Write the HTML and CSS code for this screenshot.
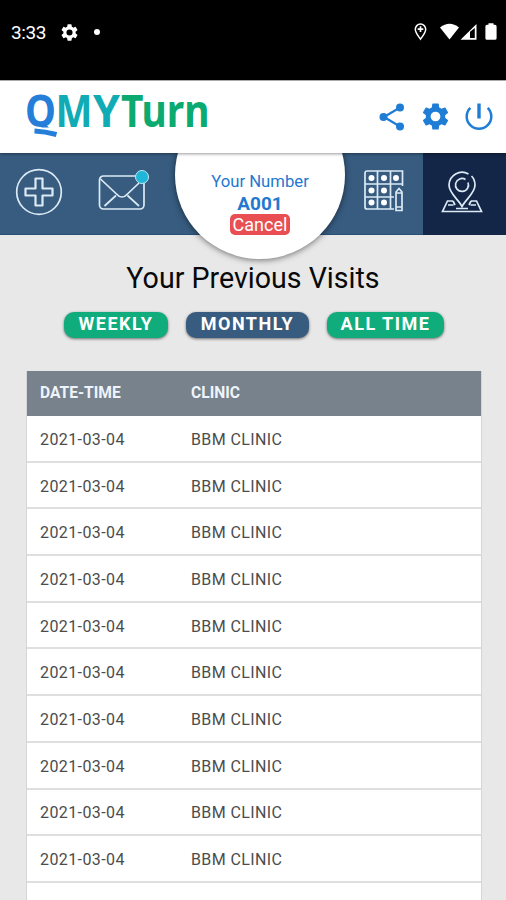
FILE: index.html
```html
<!DOCTYPE html>
<html lang="en">
<head>
<meta charset="utf-8">
<title>QMYTurn</title>
<link rel="stylesheet" href="styles.css">
</head>
<body>
<div class="status">
  <span class="clock">3:33</span>
  <svg class="gear-small" viewBox="2 2 20 20"><path fill="#fff" fill-rule="evenodd" d="M19.14 12.94a7.5 7.5 0 0 0 0-1.88l2.03-1.58a.5.5 0 0 0 .12-.61l-1.92-3.32a.5.5 0 0 0-.59-.22l-2.39.96a7 7 0 0 0-1.62-.94l-.36-2.54a.5.5 0 0 0-.48-.41h-3.84a.5.5 0 0 0-.47.41l-.36 2.54a7.4 7.4 0 0 0-1.62.94l-2.39-.96a.5.5 0 0 0-.59.22L2.74 8.87a.5.5 0 0 0 .12.61l2.03 1.58a7.5 7.5 0 0 0 0 1.88l-2.03 1.58a.5.5 0 0 0-.12.61l1.92 3.32c.12.22.37.29.59.22l2.39-.96c.5.38 1.03.7 1.62.94l.36 2.54c.05.24.24.41.48.41h3.84c.24 0 .44-.17.47-.41l.36-2.54a7.4 7.4 0 0 0 1.62-.94l2.39.96c.22.08.47 0 .59-.22l1.92-3.32a.5.5 0 0 0-.12-.61zM12 15.6a3.6 3.6 0 1 1 0-7.2 3.6 3.6 0 0 1 0 7.2z"/></svg>
  <span class="dot"></span>
  <svg class="signals" viewBox="0 0 84 18">
    <path d="M6.500 16.200C4 12.500 1.300 9.800 1.300 6.300a5.200 5.200 0 0 1 10.400 0c0 3.500-2.700 6.200-5.200 9.900z" fill="none" stroke="#fff" stroke-width="1.500"/>
    <path d="M6.500 3.300v5.600M3.700 6.100h5.600" stroke="#fff" stroke-width="1.700"/>
    <path d="M26 4.500q9.500-7.500 19 0L35.500 16.500z" fill="#fff"/>
    <path d="M46.500 16.800L62.500 1v15.800zM56 8.800v6.300h4.800V5z" fill="#fff" fill-rule="evenodd"/>
    <path d="M74.500 1.800V.3h5v1.500h1.500a1.600 1.600 0 0 1 1.600 1.600v11.800a1.600 1.600 0 0 1-1.600 1.600h-8a1.600 1.600 0 0 1-1.600-1.600V3.400A1.600 1.600 0 0 1 73 1.800z" fill="#fff"/>
  </svg>
</div>
<header class="top">
  <svg class="logo" viewBox="0 0 190 50">
    <defs><clipPath id="bowl"><rect x="0" y="0" width="40" height="37.600"/></clipPath></defs>
    <text class="brand blue" x="0" y="37" textLength="31" lengthAdjust="spacingAndGlyphs" clip-path="url(#bowl)">Q</text>
    <path d="M9.500 41Q20 41.500 31.500 44.500" fill="none" stroke="#257fd8" stroke-width="5"/>
    <text class="brand teal" x="30.500" y="37" textLength="37" lengthAdjust="spacingAndGlyphs">M</text>
    <text class="brand teal" x="68" y="37" textLength="27" lengthAdjust="spacingAndGlyphs">Y</text>
    <text class="brand green" x="96" y="37" textLength="88.500" lengthAdjust="spacingAndGlyphs">Turn</text>
  </svg>
  <svg class="share" viewBox="0 0 26 28"><path d="M21 4.500L5 14l16 9.500" fill="none" stroke="#1f7dd6" stroke-width="2.300"/><g fill="#1f7dd6"><circle cx="21" cy="4.500" r="4"/><circle cx="4.500" cy="14" r="4"/><circle cx="21" cy="23.500" r="4"/></g></svg>
  <svg class="gear" viewBox="2 2 20 20"><path fill="#1f7dd6" fill-rule="evenodd" d="M19.140 12.940a7.500 7.500 0 0 0 0-1.880l2.030-1.580a.5.5 0 0 0 .12-.61l-1.920-3.320a.5.5 0 0 0-.59-.22l-2.390.96a7 7 0 0 0-1.620-.94l-.36-2.540a.5.5 0 0 0-.48-.41h-3.840a.5.5 0 0 0-.47.41l-.36 2.540a7.400 7.400 0 0 0-1.620.94l-2.390-.96a.5.5 0 0 0-.59.22L2.740 8.870a.5.5 0 0 0 .12.61l2.030 1.580a7.500 7.500 0 0 0 0 1.880l-2.030 1.580a.5.5 0 0 0-.12.61l1.920 3.320c.12.22.37.29.59.22l2.390-.96c.5.38 1.030.7 1.620.94l.36 2.540c.05.24.24.41.48.41h3.840c.24 0 .44-.17.47-.41l.36-2.540a7.400 7.400 0 0 0 1.620-.94l2.390.96c.22.08.47 0 .59-.22l1.920-3.320a.5.5 0 0 0-.12-.61zM12 15.600a3.600 3.600 0 1 1 0-7.200 3.600 3.600 0 0 1 0 7.200z"/></svg>
  <svg class="power" viewBox="0 0 28 28"><path d="M5.300 4.800a12.300 12.300 0 1 0 17.400 0" fill="none" stroke="#1f7dd6" stroke-width="2.500"/><path d="M14 .5V15.500" stroke="#1f7dd6" stroke-width="3.400"/></svg>
</header>
<nav class="nav">
  <a class="item plus"><svg viewBox="0 0 48 48"><circle cx="24" cy="24" r="22.300"/><path d="M20.500 10.500h7v10H37.500v7H27.500v10h-7v-10H10.500v-7h10z" stroke-linejoin="round"/></svg></a>
  <a class="item mail"><svg viewBox="0 0 52 42"><rect x="1.500" y="7" width="44.500" height="33" rx="4"/><path d="M2.500 10L18.500 25Q21 28 24 28t5.500-3L41 14M6.500 37L18 26.500M41 37L29.500 26.500"/><circle class="badge" cx="44" cy="8" r="6.500"/></svg></a>
  <div class="ticket"><div class="disc">
    <span class="label">Your Number</span><b class="number">A001</b><button class="cancel">Cancel</button>
  </div></div>
  <a class="item grid"><svg viewBox="0 0 40 42"><path d="M30 39H3a2 2 0 0 1-2-2V3a2 2 0 0 1 2-2h35.500v15M13.500 1v38M26.500 1v38M1 14h37.500M1 27h29"/><g class="dots"><circle cx="7.500" cy="8" r="3"/><circle cx="20" cy="8" r="3"/><circle cx="32" cy="8" r="3"/><circle cx="7.500" cy="20.500" r="3"/><circle cx="20" cy="20.500" r="3"/><circle cx="7.500" cy="32.500" r="3"/><circle cx="20" cy="32.500" r="3"/></g><path class="pen" d="M32 40.500V22l3-3.500 3 3.500v18.500zM32 37h6M32 23h6"/></svg></a>
  <a class="item place"><svg viewBox="0 0 42 44"><path d="M27.500 4A13 13 0 0 0 8 15c0 8 9 14 13 21.500C25 29 34 23 34 15a13 13 0 0 0-3.500-9"/><path d="M24.500 9.500a6.500 6.500 0 1 0 2.500 3"/><path d="M12 31H6.500L1.500 41.500h39L35.500 31H30M12.500 35H7M29.500 35H35M12 31l2 4M30 31l-2 4M15 38.500h12"/></svg></a>
</nav>
<main>
  <h1>Your Previous Visits</h1>
  <div class="filters"><button class="w">WEEKLY</button><button class="m active">MONTHLY</button><button class="a">ALL TIME</button></div>
  <table>
    <thead><tr><th class="date">DATE-TIME</th><th>CLINIC</th></tr></thead>
    <tbody>
      <tr><td>2021-03-04</td><td>BBM CLINIC</td></tr>
      <tr><td>2021-03-04</td><td>BBM CLINIC</td></tr>
      <tr><td>2021-03-04</td><td>BBM CLINIC</td></tr>
      <tr><td>2021-03-04</td><td>BBM CLINIC</td></tr>
      <tr><td>2021-03-04</td><td>BBM CLINIC</td></tr>
      <tr><td>2021-03-04</td><td>BBM CLINIC</td></tr>
      <tr><td>2021-03-04</td><td>BBM CLINIC</td></tr>
      <tr><td>2021-03-04</td><td>BBM CLINIC</td></tr>
      <tr><td>2021-03-04</td><td>BBM CLINIC</td></tr>
      <tr><td>2021-03-04</td><td>BBM CLINIC</td></tr>
      <tr><td></td><td></td></tr>
    </tbody>
  </table>
</main>
</body>
</html>
```
FILE: styles.css
```css
* { box-sizing: border-box; }
body { margin: 0; width: 506px; height: 900px; overflow: hidden; background: #e8e8e8; font-family: Roboto, sans-serif; display: flex; flex-direction: column; }
svg { display: block; flex: none; overflow: visible; }
button { border: 0; padding: 0; font-family: inherit; color: #fff; }
.status { height: 80px; flex: none; background: #000; display: flex; align-items: center; padding: 0 8px 16px 11px; color: #fff; }
.clock { font-size: 19px; line-height: 24px; width: 50px; padding-top: 2px; letter-spacing: -.4px; }
.gear-small { width: 17px; height: 17px; }
.dot { width: 6px; height: 6px; border-radius: 50%; background: #fff; margin-left: 16px; }
.signals { width: 84px; height: 18px; margin-left: auto; }
.top { height: 73px; flex: none; background: #fff; border-top: 1px solid #aaa; display: flex; align-items: flex-start; padding: 0 13px 0 25px; position: relative; z-index: 3; box-shadow: 0 1px 3px #0006; }
.logo { width: 190px; height: 50px; margin-top: 9px; }
.brand { font-family: "Noto Sans", sans-serif; font-weight: 700; font-size: 45px; }
.blue { fill: #257fd8; } .teal { fill: #10abb4; } .green { fill: #0aaa70; }
.share { width: 26px; height: 28px; margin: 22px 0 0 auto; }
.gear { width: 27px; height: 27px; margin: 22px 0 0 17px; }
.power { width: 28px; height: 28px; margin: 22px 0 0 16px; }
.nav { height: 82px; flex: none; display: grid; grid-template-columns: 80px 95px 170px 78px 83px; grid-template-rows: 82px; background: #375c80; position: relative; z-index: 2; box-shadow: inset 0 -1px #294f76; }
.item svg { fill: none; stroke: #dceaf5; stroke-width: 1.700; }
.plus svg { width: 48px; height: 48px; margin: 15px 0 0 15px; }
.plus svg path { stroke-width: 2.200; }
.mail svg { width: 52px; height: 42px; margin: 16px 0 0 18px; }
.mail .badge { fill: #1fb6da; stroke: #bcebf5; stroke-width: 1; }
.ticket { height: 120px; overflow: hidden; margin: 0 -10px; padding: 0 10px; }
.disc { width: 170px; height: 168px; margin-top: -62px; border-radius: 50%; background: #fff; box-shadow: 0 1px 6px #0008; display: flex; flex-direction: column; align-items: center; padding-top: 81px; color: #2478cf; }
.label { font-size: 16.700px; line-height: 20px; }
.number { font-size: 19px; line-height: 22px; padding-top: 1px; height: 22px; font-weight: 700; }
.cancel { background: #e94f52; width: 60px; height: 21px; border-radius: 5px; font-size: 18px; line-height: 21px; }
.grid svg { width: 40px; height: 42px; margin: 17px 0 0 19px; }
.grid .dots { fill: #fff; stroke: none; }
.grid .pen { fill: #375c80; }
.place { background: #142647; }
.place svg { width: 42px; height: 44px; margin: 17px 0 0 18px; }
h1 { margin: 26px 0 0; text-align: center; font-size: 28.600px; line-height: 34px; font-weight: 400; color: #090909; }
.filters { display: flex; margin: 17px 0 0 64px; gap: 18px; }
.filters button { height: 26px; border-radius: 10px; background: #10ac7c; font-size: 18px; line-height: 24px; padding-bottom: 2px; font-weight: 700; letter-spacing: 1.500px; box-shadow: 0 1px 3px #0008; }
.filters .w { width: 104px; } .filters .m { width: 123px; } .filters .a { width: 117px; }
.filters .active { background: #375c80; }
table { width: 456px; margin: 33px 0 0 26px; border-collapse: separate; border-spacing: 0; table-layout: fixed; background: #fff; border: solid #d5d5d5; border-width: 0 1px; }
th { height: 45px; background: #77828d; color: #eef4fa; font-size: 15.600px; font-weight: 700; text-align: left; padding: 0 13px 1px; }
.date { width: 151px; }
td { height: 46.700px; padding: 2px 13px 0; border-bottom: 2px solid #dfdfdf; color: #4c4c4c; font-size: 16px; letter-spacing: .4px; }
```
